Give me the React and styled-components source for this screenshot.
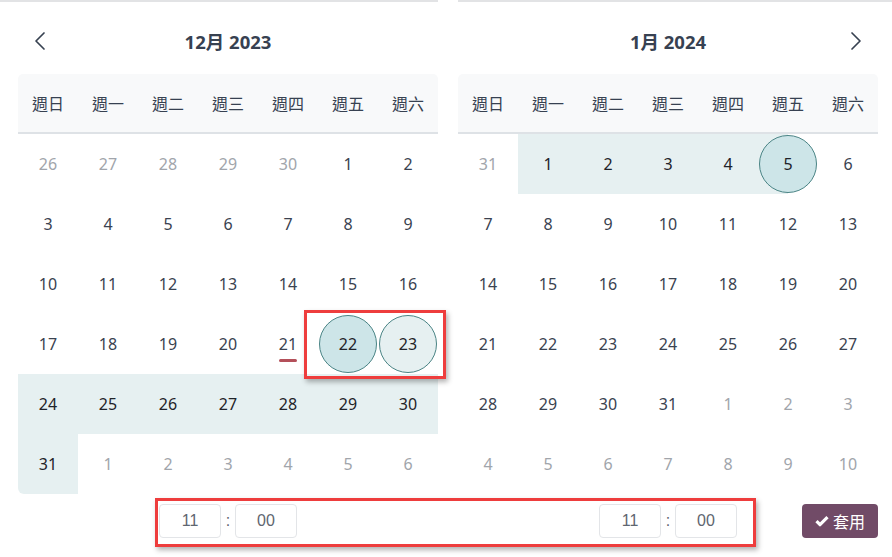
import React from "react";
import styled, { createGlobalStyle } from "styled-components";

const Global = createGlobalStyle`
  html, body { margin: 0; padding: 0; background: #fff; }
  body { font-family: "Noto Sans", "Noto Sans CJK TC", sans-serif; color: #374151; }
`;

const Page = styled.div`
  position: relative;
  width: 892px;
  height: 557px;
  overflow: hidden;
`;

const Months = styled.div`
  display: grid;
  grid-template-columns: 420px 420px;
  column-gap: 20px;
  padding-left: 18px;
`;

const Panel = styled.section`
  display: flex;
  flex-direction: column;
  position: relative;
`;

const TopRule = styled.div`
  height: 2px;
  background: #e2e3e5;
  margin-left: ${(p) => (p.$first ? "-18px" : "0")};
  margin-right: ${(p) => (p.$first ? "0" : "-14px")};
`;

const Header = styled.div`
  display: grid;
  grid-template-columns: 44px 1fr 44px;
  align-items: center;
  height: 62px;
  padding-top: 8px;
  padding-bottom: 2px;
`;

const NavButton = styled.button`
  border: 0;
  background: transparent;
  padding: 0;
  height: 24px;
  display: flex;
  align-items: center;
  justify-content: center;
  color: #374151;
  cursor: pointer;
  grid-column: ${(p) => (p.$side === "left" ? 1 : 3)};
  grid-row: 1;
`;

const Title = styled.div`
  grid-column: 2;
  grid-row: 1;
  text-align: center;
  font-weight: 700;
  font-size: 18.5px;
  color: #374151;
`;

const Grid = styled.div`
  display: grid;
  grid-template-columns: repeat(7, 60px);
`;

const WeekHead = styled(Grid)`
  height: 58px;
  background: #f8f9fa;
  border-radius: 5px 5px 0 0;
  border-bottom: 2px solid #dee2e6;
  align-items: center;
`;

const WeekDay = styled.div`
  text-align: center;
  font-size: 16px;
  color: #374151;
`;

const Day = styled.div`
  height: 60px;
  display: flex;
  align-items: center;
  justify-content: center;
  position: relative;
  font-size: 16px;
  color: ${(p) => (p.$muted ? "#a1a5ab" : p.$range ? "#1f2329" : "#3a4250")};
  background: ${(p) =>
    p.$range === "full"
      ? "#e6f0f1"
      : p.$range === "left"
      ? "linear-gradient(to right, #e6f0f1 50%, transparent 50%)"
      : "transparent"};
  border-bottom-left-radius: ${(p) => (p.$corner ? "6px" : "0")};
`;

const Circle = styled.div`
  position: relative;
  width: 58px;
  height: 58px;
  box-sizing: border-box;
  border-radius: 50%;
  border: 1.6px solid #4a8485;
  background: ${(p) => (p.$light ? "#e6f0f1" : "#cde5e8")};
  display: flex;
  align-items: center;
  justify-content: center;
  color: #1f2329;
`;

const Today = styled.span`
  position: relative;
  &::after {
    content: "";
    position: absolute;
    left: 0;
    right: 0;
    bottom: -7px;
    height: 3px;
    border-radius: 2px;
    background: #b4505a;
  }
`;

const Footer = styled.div`
  display: grid;
  grid-template-columns: 420px 420px;
  column-gap: 20px;
  padding-left: 18px;
  margin-top: 10px;
`;

const FooterCell = styled.div`
  display: grid;
  grid-template-columns: 1fr auto 1fr;
  align-items: center;
`;

const TimeGroup = styled.div`
  grid-column: 2;
  display: flex;
  align-items: center;
`;

const TimeBox = styled.div`
  width: 62px;
  height: 34px;
  box-sizing: border-box;
  border: 1px solid #e3e5e8;
  border-radius: 4px;
  display: flex;
  align-items: center;
  justify-content: center;
  font-family: "Liberation Sans", Arial, sans-serif;
  font-size: 16px;
  color: #5f6670;
`;

const Colon = styled.span`
  width: 14px;
  text-align: center;
  font-family: "Liberation Sans", Arial, sans-serif;
  font-size: 16px;
  color: #5f6670;
`;

const ApplyButton = styled.button`
  grid-column: 3;
  justify-self: end;
  width: 76px;
  height: 34px;
  border: 0;
  border-radius: 4px;
  background: #714b67;
  color: #fff;
  font-family: "Noto Sans", "Noto Sans CJK TC", sans-serif;
  font-size: 16px;
  display: flex;
  align-items: center;
  justify-content: center;
  gap: 4px;
  padding: 0;
`;

const Annotation = styled.div`
  position: absolute;
  left: ${(p) => p.$x}px;
  top: ${(p) => p.$y}px;
  width: ${(p) => p.$w}px;
  height: ${(p) => p.$h}px;
  box-sizing: border-box;
  border: 3px solid #ee3d3d;
  box-shadow: 2px 3px 5px rgba(0, 0, 0, 0.3);
  pointer-events: none;
`;

const Chevron = ({ dir }) => (
  <svg width="12" height="20" viewBox="0 0 12 20" fill="none">
    <polyline
      points={dir === "left" ? "10,2 2,10 10,18" : "2,2 10,10 2,18"}
      stroke="#374151"
      strokeWidth="1.7"
      strokeLinecap="round"
      strokeLinejoin="round"
    />
  </svg>
);

const Check = () => (
  <svg width="14" height="12" viewBox="0 0 14 12">
    <path d="M1.5 6.2 L5 9.7 L12.5 2.2" stroke="#fff" strokeWidth="3.2" fill="none" strokeLinejoin="round" />
  </svg>
);

const WEEKDAYS = ["週日", "週一", "週二", "週三", "週四", "週五", "週六"];

function buildDays(year, month) {
  const first = new Date(year, month, 1).getDay();
  const daysIn = new Date(year, month + 1, 0).getDate();
  const prevDays = new Date(year, month, 0).getDate();
  const out = [];
  for (let i = first - 1; i >= 0; i--) out.push({ d: prevDays - i, muted: true });
  for (let d = 1; d <= daysIn; d++) out.push({ d, muted: false });
  let n = 1;
  while (out.length < 42) out.push({ d: n++, muted: true });
  return out;
}

const dec = buildDays(2023, 11).map((c, i) => {
  if (c.muted) return c;
  if (c.d === 21) return { ...c, today: true };
  if (c.d === 22) return { ...c, circle: "strong" };
  if (c.d === 23) return { ...c, circle: "light" };
  if (c.d >= 24) return { ...c, range: "full", corner: i === 35 };
  return c;
});

const jan = buildDays(2024, 0).map((c) => {
  if (c.muted) return c;
  if (c.d >= 1 && c.d <= 4) return { ...c, range: "full" };
  if (c.d === 5) return { ...c, range: "left", circle: "strong" };
  return c;
});

function Month({ title, days, nav, first }) {
  return (
    <Panel>
      <TopRule $first={first} />
      <Header>
        {nav && (
          <NavButton $side={nav}>
            <Chevron dir={nav} />
          </NavButton>
        )}
        <Title>{title}</Title>
      </Header>
      <WeekHead>
        {WEEKDAYS.map((w) => (
          <WeekDay key={w}>{w}</WeekDay>
        ))}
      </WeekHead>
      <Grid>
        {days.map((c, i) => (
          <Day key={i} $muted={c.muted} $range={c.range} $corner={c.corner}>
            {c.circle ? (
              <Circle $light={c.circle === "light"}>{c.d}</Circle>
            ) : c.today ? (
              <Today>{c.d}</Today>
            ) : (
              c.d
            )}
          </Day>
        ))}
      </Grid>
    </Panel>
  );
}

export default function App() {
  return (
    <Page>
      <Global />
      <Months>
        <Month title="12月 2023" days={dec} nav="left" first />
        <Month title="1月 2024" days={jan} nav="right" />
      </Months>
      <Footer>
        <FooterCell>
          <TimeGroup>
            <TimeBox>11</TimeBox>
            <Colon>:</Colon>
            <TimeBox>00</TimeBox>
          </TimeGroup>
        </FooterCell>
        <FooterCell>
          <TimeGroup>
            <TimeBox>11</TimeBox>
            <Colon>:</Colon>
            <TimeBox>00</TimeBox>
          </TimeGroup>
          <ApplyButton>
            <Check />
            套用
          </ApplyButton>
        </FooterCell>
      </Footer>
      <Annotation $x={304} $y={310} $w={142} $h={69} />
      <Annotation $x={155} $y={498} $w={601} $h={49} />
    </Page>
  );
}
